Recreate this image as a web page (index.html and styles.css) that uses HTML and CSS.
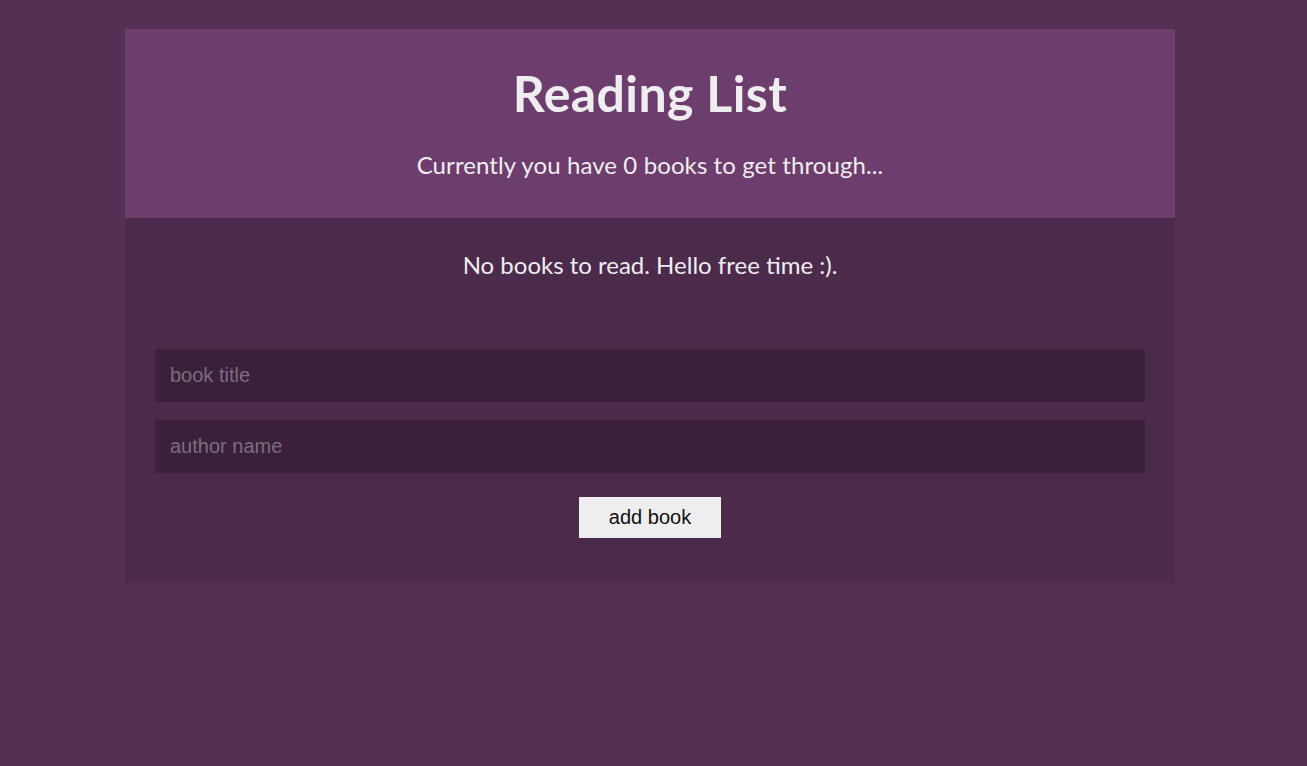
FILE: index.html
```html
<!DOCTYPE html>
<html lang="en">
<head>
<meta charset="utf-8">
<title>Reading List</title>
<link rel="stylesheet" href="styles.css">
</head>
<body>
<div class="app">
  <div class="navbar">
    <h1>Reading List</h1>
    <p>Currently you have 0 books to get through...</p>
  </div>
  <div class="empty">No books to read. Hello free time :).</div>
  <form class="book-form">
    <input type="text" class="field" placeholder="book title">
    <input type="text" class="field" placeholder="author name">
    <input type="submit" class="submit" value="add book">
  </form>
</div>
</body>
</html>
```

FILE: styles.css
```css
body {
  margin: 0;
  padding: 29px 37px 0 30px;
  background: #553055;
  font-family: "Lato", "Noto Sans", sans-serif;
}
.app {
  background: #4c2a4c;
  margin: 0 auto;
  width: 90%;
  max-width: 1050px;
  color: #eee;
}
.navbar {
  padding: 15px 30px;
  text-align: center;
  background: #6d3d6d;
}
.navbar h1 {
  margin: 17px 0 13px;
  font-size: 50px;
  line-height: 64px;
  letter-spacing: 0.4px;
  font-weight: 700;
}
.navbar p {
  margin: 24px 0 22px;
  font-size: 24px;
  line-height: 32px;
  letter-spacing: 0.1px;
}
.empty {
  margin: 31px 30px 29px;
  text-align: center;
  font-size: 24px;
  line-height: 32px;
}
.book-form {
  display: flex;
  flex-direction: column;
  padding: 30px;
}
.field {
  width: 100%;
  padding: 15px;
  box-sizing: border-box;
  margin: 9px 0;
  background: #3c1f3c;
  color: #fff;
  border: 0;
  font-family: "Liberation Sans", Arial, sans-serif;
  font-size: 20px;
  line-height: 23px;
  outline: none;
}
.field::placeholder {
  color: #7a6f7a;
}
.submit {
  align-self: center;
  margin: 15px 0;
  background: #eee;
  color: #111;
  border: 0;
  padding: 9px 30px;
  font-family: "Liberation Sans", Arial, sans-serif;
  font-size: 20px;
  line-height: 23px;
}
```
